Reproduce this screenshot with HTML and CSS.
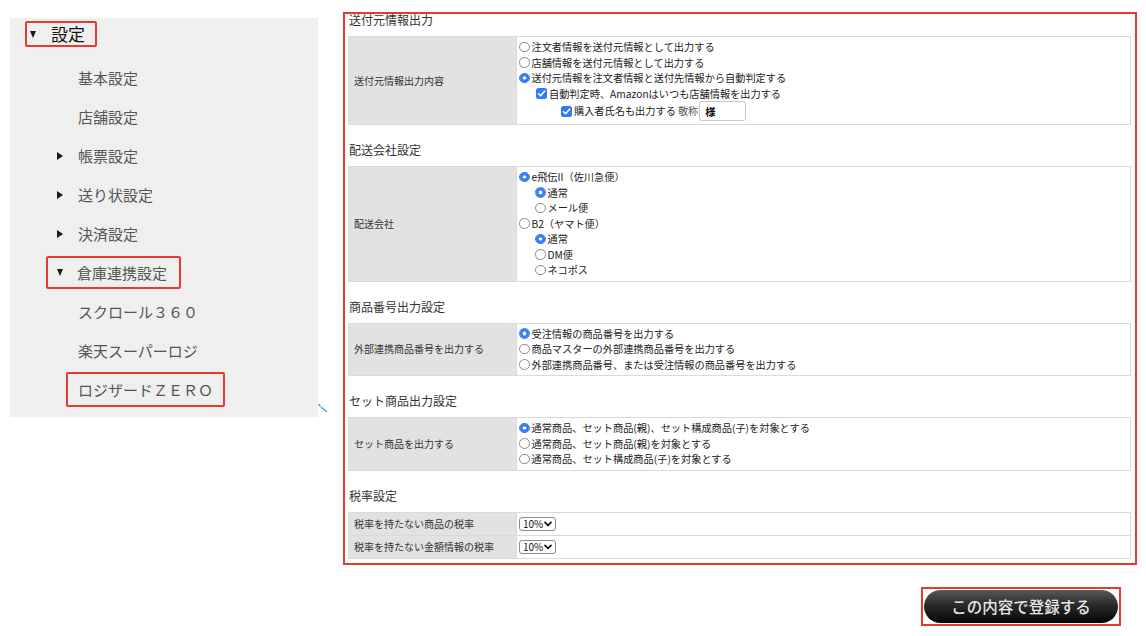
FILE: index.html
```html
<!DOCTYPE html>
<html lang="ja">
<head>
<meta charset="utf-8">
<title>設定</title>
<link rel="stylesheet" href="styles.css">
</head>
<body>
<div class="page">
  <aside class="side">
    <div class="side-head"><span class="hbox"><span class="tri-down big"></span>設定</span></div>
    <ul class="menu">
      <li class="item"><span class="ibox"><span class="tri-none"></span>基本設定</span></li>
      <li class="item"><span class="ibox"><span class="tri-none"></span>店舗設定</span></li>
      <li class="item"><span class="ibox"><span class="tri-right"></span>帳票設定</span></li>
      <li class="item"><span class="ibox"><span class="tri-right"></span>送り状設定</span></li>
      <li class="item"><span class="ibox"><span class="tri-right"></span>決済設定</span></li>
      <li class="item"><span class="ibox marked"><span class="tri-down"></span>倉庫連携設定</span></li>
      <li class="item sub"><span class="ibox">スクロール３６０</span></li>
      <li class="item sub"><span class="ibox">楽天スーパーロジ</span></li>
      <li class="item sub"><span class="ibox marked tall">ロジザードＺＥＲＯ</span></li>
    </ul>
    <svg class="grip" width="10" height="10" viewBox="0 0 10 10"><path d="M1 1.5 L2 3 M3.5 4.5 L8.5 8.5" stroke="#5b9ff0" stroke-width="1.6" fill="none" stroke-linecap="round"/></svg>
  </aside>

  <main class="main">
    <div class="panel">
      <section class="sec first">
        <h2 class="sec-title">送付元情報出力</h2>
        <table class="tbl">
          <colgroup><col class="c-label"><col></colgroup>
          <tr>
            <th>送付元情報出力内容</th>
            <td class="opts">
              <label class="opt"><input type="radio" name="src">注文者情報を送付元情報として出力する</label>
              <label class="opt"><input type="radio" name="src">店舗情報を送付元情報として出力する</label>
              <label class="opt"><input type="radio" name="src" checked>送付元情報を注文者情報と送付先情報から自動判定する</label>
              <label class="opt ind-c1"><span class="cb"><svg width="11" height="11" viewBox="0 0 11 11"><rect x="0" y="0" width="11" height="11" rx="2.5" fill="#2f7cf6"/><path d="M2.6 5.8 L4.6 7.8 L8.5 3.2" stroke="#fff" stroke-width="1.6" fill="none" stroke-linecap="round" stroke-linejoin="round"/></svg></span>自動判定時、Amazonはいつも店舗情報を出力する</label>
              <label class="opt ind-c2 with-input"><span class="cb"><svg width="11" height="11" viewBox="0 0 11 11"><rect x="0" y="0" width="11" height="11" rx="2.5" fill="#2f7cf6"/><path d="M2.6 5.8 L4.6 7.8 L8.5 3.2" stroke="#fff" stroke-width="1.6" fill="none" stroke-linecap="round" stroke-linejoin="round"/></svg></span>購入者氏名も出力する <span class="muted">敬称</span><input class="txt" type="text" value="様"></label>
            </td>
          </tr>
        </table>
      </section>

      <section class="sec">
        <h2 class="sec-title">配送会社設定</h2>
        <table class="tbl">
          <colgroup><col class="c-label"><col></colgroup>
          <tr>
            <th>配送会社</th>
            <td class="opts">
              <label class="opt"><input type="radio" name="co" checked>e飛伝II（佐川急便）</label>
              <label class="opt ind-r2"><input type="radio" name="sg" checked>通常</label>
              <label class="opt ind-r2"><input type="radio" name="sg">メール便</label>
              <label class="opt"><input type="radio" name="co">B2（ヤマト便）</label>
              <label class="opt ind-r2"><input type="radio" name="ym" checked>通常</label>
              <label class="opt ind-r2"><input type="radio" name="ym">DM便</label>
              <label class="opt ind-r2"><input type="radio" name="ym">ネコポス</label>
            </td>
          </tr>
        </table>
      </section>

      <section class="sec">
        <h2 class="sec-title">商品番号出力設定</h2>
        <table class="tbl">
          <colgroup><col class="c-label"><col></colgroup>
          <tr>
            <th>外部連携商品番号を出力する</th>
            <td class="opts">
              <label class="opt"><input type="radio" name="pn" checked>受注情報の商品番号を出力する</label>
              <label class="opt"><input type="radio" name="pn">商品マスターの外部連携商品番号を出力する</label>
              <label class="opt"><input type="radio" name="pn">外部連携商品番号、または受注情報の商品番号を出力する</label>
            </td>
          </tr>
        </table>
      </section>

      <section class="sec">
        <h2 class="sec-title">セット商品出力設定</h2>
        <table class="tbl">
          <colgroup><col class="c-label"><col></colgroup>
          <tr>
            <th>セット商品を出力する</th>
            <td class="opts">
              <label class="opt"><input type="radio" name="st" checked>通常商品、セット商品(親)、セット構成商品(子)を対象とする</label>
              <label class="opt"><input type="radio" name="st">通常商品、セット商品(親)を対象とする</label>
              <label class="opt"><input type="radio" name="st">通常商品、セット構成商品(子)を対象とする</label>
            </td>
          </tr>
        </table>
      </section>

      <section class="sec">
        <h2 class="sec-title">税率設定</h2>
        <table class="tbl tax">
          <colgroup><col class="c-label"><col></colgroup>
          <tr>
            <th>税率を持たない商品の税率</th>
            <td><span class="sel"><select><option>10%</option><option>8%</option></select><svg class="chev" width="8" height="6" viewBox="0 0 8 6"><path d="M1 1.3 L4 4.3 L7 1.3" stroke="#111" stroke-width="1.7" fill="none" stroke-linecap="round" stroke-linejoin="round"/></svg></span></td>
          </tr>
          <tr>
            <th>税率を持たない金額情報の税率</th>
            <td><span class="sel"><select><option>10%</option><option>8%</option></select><svg class="chev" width="8" height="6" viewBox="0 0 8 6"><path d="M1 1.3 L4 4.3 L7 1.3" stroke="#111" stroke-width="1.7" fill="none" stroke-linecap="round" stroke-linejoin="round"/></svg></span></td>
          </tr>
        </table>
      </section>
    </div>

    <div class="actions">
      <span class="btn-frame"><button class="btn" type="button">この内容で登録する</button></span>
    </div>
  </main>
</div>
</body>
</html>
```

FILE: styles.css
```css
* { box-sizing: border-box; }

html, body {
  margin: 0;
  padding: 0;
  background: #fff;
}

body {
  font-family: "Noto Sans CJK JP", "Noto Sans", sans-serif;
  color: #333;
}

.page {
  display: flex;
  align-items: flex-start;
  padding: 12px 0 0 10px;
}

/* ---------- sidebar ---------- */
.side {
  position: relative;
  width: 308px;
  margin-top: 6px;
  margin-right: 25px;
  background: #efefef;
  padding: 3px 0 8px;
}

.side-head {
  display: flex;
  padding-left: 15px;
}

.hbox {
  display: inline-flex;
  align-items: center;
  height: 26px;
  border: 2px solid #e33b30;
  border-radius: 2px;
  padding: 0 10px 0 3px;
  font-size: 17px;
  line-height: 22px;
  color: #111;
}

.tri-down {
  width: 0;
  height: 0;
  border-left: 3.5px solid transparent;
  border-right: 3.5px solid transparent;
  border-top: 7px solid #1a1a1a;
  margin-right: 14px;
}

.tri-down.big {
  margin-right: 15px;
}

.tri-right {
  width: 0;
  height: 0;
  border-top: 4px solid transparent;
  border-bottom: 4px solid transparent;
  border-left: 6px solid #1a1a1a;
  margin-right: 15px;
}

.tri-none {
  width: 6px;
  margin-right: 15px;
}

.menu {
  list-style: none;
  margin: 11px 0 0;
  padding: 0;
}

.item {
  height: 39px;
  display: flex;
  align-items: center;
  padding-left: 36px;
  font-size: 15px;
  color: #555;
}

.item.sub {
  padding-left: 56px;
}

.ibox {
  display: inline-flex;
  align-items: center;
  border: 2px solid transparent;
  border-radius: 2px;
  padding: 5px 12px 5px 9px;
  line-height: 19px;
  white-space: nowrap;
}

.sub .ibox {
  padding-left: 10px;
  padding-right: 10px;
}

.ibox.marked {
  border-color: #e33b30;
}

.ibox.tall {
  padding-top: 6px;
  padding-bottom: 6px;
}

.grip {
  position: absolute;
  right: -10px;
  bottom: 4px;
}

/* ---------- main panel ---------- */
.main {
  width: 794px;
}

.panel {
  border: 2px solid #e33b30;
  padding: 0 4px 4px 3px;
}

.sec {
  margin-top: 18px;
}

.sec.first {
  margin-top: -1px;
}

.sec-title {
  margin: 0 0 9px 1px;
  font-size: 12px;
  line-height: 14px;
  font-weight: normal;
  color: #333;
}

.tbl {
  width: 100%;
  border-collapse: collapse;
  table-layout: fixed;
  border: 1px solid #dadada;
}

.c-label {
  width: 168px;
}

.tbl th {
  background: #e2e2e2;
  border: 1px solid #dadada;
  font-weight: normal;
  text-align: left;
  font-size: 10px;
  line-height: 14px;
  color: #333;
  padding: 0 4px 0 5px;
  vertical-align: middle;
  white-space: nowrap;
}

.tbl td {
  border: 1px solid #dadada;
  background: #fff;
  padding: 2px 2px 3px 2px;
  vertical-align: top;
  font-size: 10px;
  line-height: 14px;
}

.opt {
  display: flex;
  align-items: center;
  height: 15.5px;
  font-size: 10.2px;
  line-height: 15.5px;
  color: #222;
  white-space: nowrap;
}

.opt input[type="radio"] {
  appearance: none;
  -webkit-appearance: none;
  width: 10.5px;
  height: 10.5px;
  margin: 0 2px 0 0;
  border: 1px solid #8d8d8d;
  border-radius: 50%;
  background: #fff;
  flex: none;
}

.opt input[type="radio"]:checked {
  border-color: #2f7cf6;
  background: #fff;
  box-shadow: inset 0 0 0 2.6px #2f7cf6;
}

.ind-r2 {
  padding-left: 16px;
}

.ind-c1 {
  padding-left: 17px;
}

.ind-c2 {
  padding-left: 42px;
}

.cb {
  display: inline-flex;
  width: 11px;
  height: 11px;
  margin-right: 2px;
  flex: none;
}

.with-input {
  height: 20px;
}

.muted {
  color: #555;
  margin-left: 2px;
}

.txt {
  width: 47px;
  height: 20px;
  margin: 0 0 0 1px;
  border: 1px solid #c8c8c8;
  border-radius: 3px;
  padding: 0 5px;
  font-family: inherit;
  font-size: 10.2px;
  font-weight: bold;
  color: #111;
  background: #fff;
}

.tax th,
.tax td {
  height: 23px;
  vertical-align: middle;
  padding-top: 0;
  padding-bottom: 0;
}

.tax td {
  padding-left: 2px;
}

.sel {
  position: relative;
  display: inline-flex;
  vertical-align: middle;
}

.sel select {
  appearance: none;
  -webkit-appearance: none;
  width: 37px;
  height: 14px;
  border: 1px solid #8b8b8b;
  border-radius: 3px;
  background: #fff;
  padding: 0 0 0 3px;
  margin: 0;
  font-family: inherit;
  font-size: 10px;
  line-height: 12px;
  color: #111;
}

.chev {
  position: absolute;
  right: 4px;
  top: 4px;
  pointer-events: none;
}

/* ---------- actions ---------- */
.actions {
  display: flex;
  justify-content: flex-end;
  padding-right: 16px;
  margin-top: 22px;
}

.btn-frame {
  display: inline-flex;
  border: 2px solid #e33b30;
  padding: 1px;
}

.btn {
  width: 194px;
  height: 33px;
  border: none;
  border-radius: 17px;
  background: linear-gradient(#5a5a5a 0%, #2a2a2a 45%, #050505 100%);
  color: #e6e6e6;
  font-family: "Noto Sans CJK JP", sans-serif;
  font-size: 15.5px;
  font-weight: 500;
  padding: 0;
  cursor: pointer;
}
```
